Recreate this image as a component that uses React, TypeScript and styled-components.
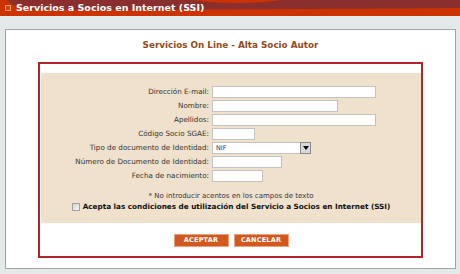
import React from 'react';
import styled, { createGlobalStyle } from 'styled-components';

const Global = createGlobalStyle`
  html, body { margin: 0; padding: 0; }
  body {
    width: 460px;
    height: 274px;
    overflow: hidden;
    background: #e3e8e8;
    font-family: "DejaVu Sans", Verdana, sans-serif;
  }
`;

const Header = styled.header`
  position: relative;
  height: 16px;
  background: #cc3300;
  overflow: hidden;
  display: flex;
  align-items: center;
  gap: 5px;
  padding-left: 5px;
`;

const Swoosh = styled.svg`
  position: absolute;
  left: 0;
  top: 0;
  width: 460px;
  height: 16px;
`;

const Bullet = styled.span`
  position: relative;
  width: 6px;
  height: 6px;
  box-sizing: border-box;
  border: 1px solid #f39a72;
  background: #d8420e;
  margin-top: -1px;
`;

const HeaderTitle = styled.h1`
  position: relative;
  margin: 0;
  margin-top: -1px;
  color: #fff;
  font-size: 9.5px;
  font-weight: bold;
  line-height: 12px;
  white-space: nowrap;
`;

const Panel = styled.main`
  margin: 13px 4px 0 5px;
  height: 240px;
  box-sizing: border-box;
  background: #fff;
  border: 1px solid #a3a3a3;
  padding-top: 10px;
`;

const Heading = styled.h2`
  margin: 0;
  text-align: center;
  color: #924a1c;
  font-size: 8.8px;
  line-height: 11px;
  font-weight: bold;
`;

const RedBox = styled.section`
  width: 385px;
  height: 196px;
  box-sizing: border-box;
  margin: 11px auto 0;
  border: 2px solid #b3242a;
  padding: 9px 0 0 1px;
`;

const Beige = styled.div`
  height: 150px;
  box-sizing: border-box;
  background: #efe1cb;
  padding-top: 13px;
`;

const FormGrid = styled.div`
  display: grid;
  grid-template-columns: 168px auto;
  grid-auto-rows: 12px;
  column-gap: 3px;
  row-gap: 2px;
`;

const Label = styled.label`
  text-align: right;
  font-size: 7.2px;
  line-height: 12px;
  color: #333;
  white-space: nowrap;
`;

const TextInput = styled.input<{ $w: number }>`
  width: ${(p) => p.$w}px;
  height: 12px;
  box-sizing: border-box;
  margin: 0;
  padding: 0 2px;
  border: 1px solid #c2c2c2;
  background: #fff;
  font-size: 7px;
  font-family: "DejaVu Sans", Verdana, sans-serif;
`;

const Select = styled.div<{ $w: number }>`
  width: ${(p) => p.$w}px;
  height: 12px;
  box-sizing: border-box;
  display: flex;
  align-items: stretch;
  border: 1px solid #c2c2c2;
  background: #fff;
`;

const SelectValue = styled.span`
  flex: 1;
  padding-left: 3px;
  font-size: 6.5px;
  line-height: 10px;
  color: #3c2a5a;
`;

const SelectArrow = styled.span`
  width: 11px;
  box-sizing: border-box;
  border: 1px solid #8a8a8a;
  margin: -1px -1px -1px 0;
  background: #d8d8d8;
  display: flex;
  align-items: center;
  justify-content: center;
`;

const Note = styled.p`
  margin: 10px 0 0;
  text-align: center;
  font-size: 7px;
  line-height: 8px;
  color: #3a3344;
`;

const AcceptLine = styled.label`
  margin-top: 2px;
  display: flex;
  justify-content: center;
  align-items: center;
  gap: 3px;
  font-size: 7.25px;
  line-height: 9px;
  font-weight: bold;
  color: #111;
`;

const Check = styled.input`
  appearance: none;
  margin: 0;
  width: 8px;
  height: 8px;
  box-sizing: border-box;
  border: 1px solid #a0a0a0;
  background: linear-gradient(135deg, #d0d0d0, #fafafa);
`;

const ButtonRow = styled.div`
  margin-top: 11px;
  display: flex;
  justify-content: center;
  gap: 5px;
`;

const Button = styled.button`
  width: 55px;
  height: 13px;
  box-sizing: border-box;
  padding: 0;
  border: 1px solid #eea07a;
  background: #d2581f;
  color: #fff;
  font-family: "DejaVu Sans", Verdana, sans-serif;
  font-size: 6.5px;
  font-weight: bold;
  line-height: 11px;
  letter-spacing: 0.2px;
`;

const fields: { label: string; w: number; select?: boolean }[] = [
  { label: 'Dirección E-mail:', w: 164 },
  { label: 'Nombre:', w: 126 },
  { label: 'Apellidos:', w: 164 },
  { label: 'Código Socio SGAE:', w: 43 },
  { label: 'Tipo de documento de Identidad:', w: 99, select: true },
  { label: 'Número de Documento de Identidad:', w: 70 },
  { label: 'Fecha de nacimiento:', w: 51 },
];

export default function App() {
  return (
    <>
      <Global />
      <Header>
        <Swoosh viewBox="0 0 460 16" preserveAspectRatio="none">
          <path d="M8,0 C10,6 22,10 60,10 L200,9.5 C300,9 400,8.5 460,8 L460,0 Z" fill="#8b2e2e" />
          <path d="M190,0 C220,4 255,4 282,0 Z" fill="#cc3300" />
        </Swoosh>
        <Bullet />
        <HeaderTitle>Servicios a Socios en Internet (SSI)</HeaderTitle>
      </Header>
      <Panel>
        <Heading>Servicios On Line - Alta Socio Autor</Heading>
        <RedBox>
          <Beige>
            <FormGrid>
              {fields.map((f) => (
                <React.Fragment key={f.label}>
                  <Label>{f.label}</Label>
                  {f.select ? (
                    <Select $w={f.w}>
                      <SelectValue>NIF</SelectValue>
                      <SelectArrow>
                        <svg width="6" height="4" viewBox="0 0 6 4">
                          <path d="M0,0 L6,0 L3,4 Z" fill="#000" />
                        </svg>
                      </SelectArrow>
                    </Select>
                  ) : (
                    <TextInput type="text" $w={f.w} />
                  )}
                </React.Fragment>
              ))}
            </FormGrid>
            <Note>* No introducir acentos en los campos de texto</Note>
            <AcceptLine>
              <Check type="checkbox" />
              Acepta las condiciones de utilización del Servicio a Socios en Internet (SSI)
            </AcceptLine>
          </Beige>
          <ButtonRow>
            <Button>ACEPTAR</Button>
            <Button>CANCELAR</Button>
          </ButtonRow>
        </RedBox>
      </Panel>
    </>
  );
}
